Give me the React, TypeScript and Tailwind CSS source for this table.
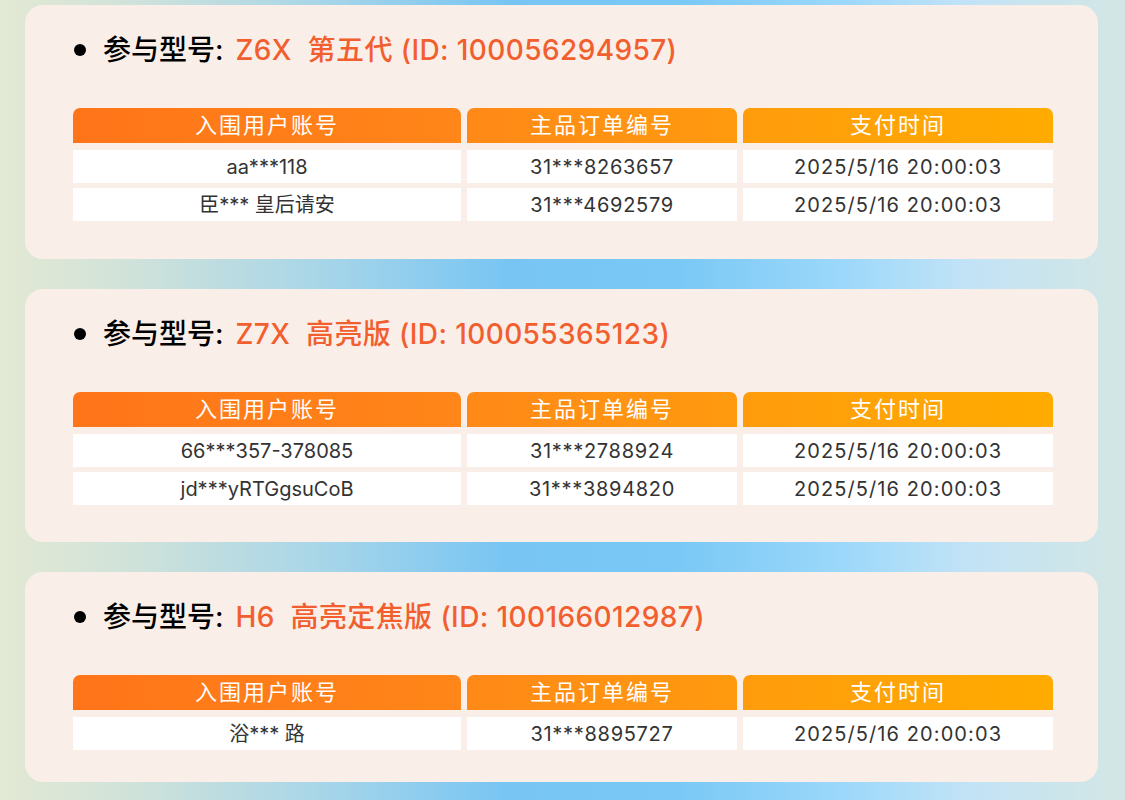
import React from 'react';

interface Entry {
    account: string;
    order: string;
    paidAt: string;
}

interface Model {
    name: string;
    id: string;
    entries: Entry[];
    pad: string;
}

const models: Model[] = [
    {
        name: 'Z6X  第五代',
        id: '100056294957',
        pad: 'pb-[38px]',
        entries: [
            { account: 'aa***118', order: '31***8263657', paidAt: '2025/5/16 20:00:03' },
            { account: '臣*** 皇后请安', order: '31***4692579', paidAt: '2025/5/16 20:00:03' },
        ],
    },
    {
        name: 'Z7X  高亮版',
        id: '100055365123',
        pad: 'pb-[37px]',
        entries: [
            { account: '66***357-378085', order: '31***2788924', paidAt: '2025/5/16 20:00:03' },
            { account: 'jd***yRTGgsuCoB', order: '31***3894820', paidAt: '2025/5/16 20:00:03' },
        ],
    },
    {
        name: 'H6  高亮定焦版',
        id: '100166012987',
        pad: 'pb-[32px]',
        entries: [
            { account: '浴*** 路', order: '31***8895727', paidAt: '2025/5/16 20:00:03' },
        ],
    },
];

const ModelCard = ({ model }: { model: Model }) => (
    <div className={`rounded-[18px] bg-[#faeee8] pl-[48px] pr-[45px] pt-[25px] ${model.pad}`}>
        <div className="flex items-center h-[40px]">
            <span className="w-[12px] h-[12px] rounded-full bg-black mr-[17px] ml-[1px]" />
            <h2 className="text-[28px] font-medium text-black whitespace-pre">
                参与型号:
                <span className="ml-[12px] text-[#f25f2f] tracking-[0.4px]">
                    {model.name} (ID: {model.id})
                </span>
            </h2>
        </div>

        <div className="mt-[38px] grid grid-cols-[388px_270px_310px] gap-x-[6px]">
            <div className="h-[35px] rounded-t-[7px] bg-gradient-to-r from-[#ff7419] to-[#ff8618] flex items-center justify-center text-white text-[22px] tracking-[2px]">
                入围用户账号
            </div>
            <div className="h-[35px] rounded-t-[7px] bg-gradient-to-r from-[#ff8917] to-[#ff9a0e] flex items-center justify-center text-white text-[22px] tracking-[2px]">
                主品订单编号
            </div>
            <div className="h-[35px] rounded-t-[7px] bg-gradient-to-r from-[#ff9c0c] to-[#ffab00] flex items-center justify-center text-white text-[22px] tracking-[2px]">
                支付时间
            </div>
        </div>

        <div className="mt-[7px] flex flex-col gap-[5px]">
            {model.entries.map(e => (
                <div key={e.order} className="grid grid-cols-[388px_270px_310px] gap-x-[6px] text-[20px] text-[#333333]">
                    <div className="h-[33px] bg-white flex items-center justify-center whitespace-pre">{e.account}</div>
                    <div className="h-[33px] bg-white flex items-center justify-center tracking-[0.7px]">{e.order}</div>
                    <div className="h-[33px] bg-white flex items-center justify-center tracking-[1.1px]">{e.paidAt}</div>
                </div>
            ))}
        </div>
    </div>
);

const App = () => {
    return (
        <div
            className="min-h-[800px] w-[1125px] pt-[5px] pl-[25px] pr-[27px] flex flex-col gap-[30px] bg-[linear-gradient(90deg,#e3e9d3_0%,#cfe2da_12%,#a9d6e8_28%,#78c5f3_45%,#79c8f5_60%,#9cd8fb_75%,#c2e3f6_86%,#d3e6e4_100%)]"
            style={{ fontFamily: 'Inter, "Noto Sans CJK SC", sans-serif' }}
        >
            {models.map(m => (
                <ModelCard key={m.id} model={m} />
            ))}
        </div>
    );
};

export default App;
